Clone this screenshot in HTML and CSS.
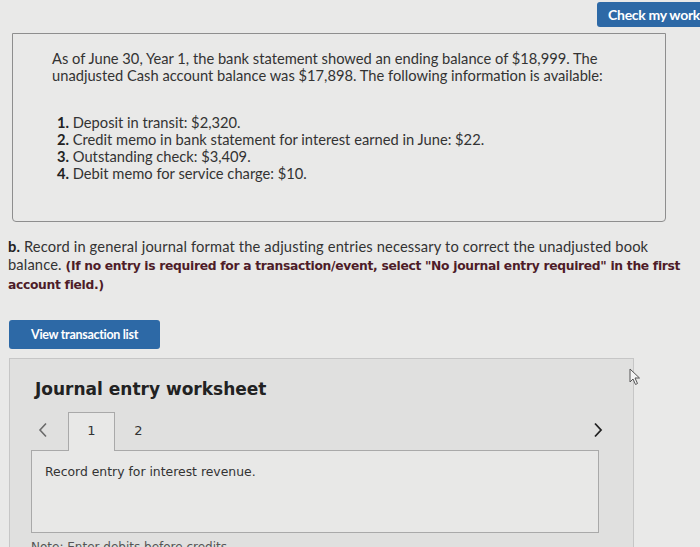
FILE: index.html
```html
<!DOCTYPE html>
<html>
<head>
<meta charset="utf-8">
<link rel="stylesheet" href="styles.css">
</head>
<body>
<div class="topbar"><button class="btn check">Check my work</button></div>
<div class="question">
  <p class="intro">As of June 30, Year 1, the bank statement showed an ending balance of $18,999. The unadjusted Cash account balance was $17,898. The following information is available:</p>
  <ol class="items">
    <li><b>1.</b> Deposit in transit: $2,320.</li>
    <li><b>2.</b> Credit memo in bank statement for interest earned in June: $22.</li>
    <li><b>3.</b> Outstanding check: $3,409.</li>
    <li><b>4.</b> Debit memo for service charge: $10.</li>
  </ol>
</div>
<p class="partb"><b class="lbl">b.</b> Record in general journal format the adjusting entries necessary to correct the unadjusted book balance. <span class="note">(If no entry is required for a transaction/event, select "No journal entry required" in the first account field.)</span></p>
<button class="btn view">View transaction list</button>
<div class="journal">
  <h2 class="jtitle">Journal entry worksheet</h2>
  <div class="tabs">
    <span class="arrow">
      <svg width="10" height="16" viewBox="0 0 10 16"><path d="M8 1.5 L2 8 L8 14.5" fill="none" stroke="#6a6a6a" stroke-width="1.6"/></svg>
    </span>
    <span class="tab active">1</span>
    <span class="tab">2</span>
    <span class="spacer"></span>
    <span class="arrow right">
      <svg width="10" height="16" viewBox="0 0 10 16"><path d="M2 1.5 L8 8 L2 14.5" fill="none" stroke="#222" stroke-width="1.8"/></svg>
    </span>
  </div>
  <div class="entry">Record entry for interest revenue.</div>
  <div class="enote">Note: Enter debits before credits.</div>
  <svg class="cursor" width="12" height="18" viewBox="0 0 12 18"><path d="M1 1 L1 14 L4 11 L6.5 16.5 L8.5 15.5 L6 10 L10.5 10 Z" fill="#f4f4f4" stroke="#555" stroke-width="1"/></svg>
</div>
</body>
</html>
```
FILE: styles.css
```css
html, body {
  margin: 0;
  padding: 0;
}
body {
  background: #e9e9e8;
  width: 700px;
  height: 547px;
  overflow: hidden;
  font-family: Lato, "Liberation Sans", sans-serif;
  color: #333;
}
.topbar {
  display: flex;
  justify-content: flex-end;
  height: 30px;
  padding-top: 2px;
  box-sizing: border-box;
  margin-right: -12px;
}
.btn {
  background: #2d69a6;
  color: #fff;
  border: none;
  border-radius: 3px;
  font-family: Lato, "Liberation Sans", sans-serif;
  font-weight: 700;
  cursor: pointer;
}
.check {
  height: 25px;
  padding: 0 12px 0 11px;
  font-size: 14px;
  letter-spacing: -0.3px;
}
.question {
  margin: 3px 34px 0 12px;
  height: 189px;
  box-sizing: border-box;
  border: 1px solid #8e8e8e;
  border-radius: 0 0 4px 4px;
  padding: 16px 10px 0 39px;
}
.intro {
  margin: 0;
  font-size: 14.7px;
  line-height: 17px;
  width: 580px;
}
.items {
  list-style: none;
  margin: 30px 0 0 5px;
  padding: 0;
  font-size: 14.7px;
  line-height: 17px;
}
.items b { font-weight: 700; color: #222; }
.partb {
  margin: 16px 0 0 8px;
  width: 680px;
  font-size: 14.7px;
  line-height: 17.5px;
  letter-spacing: 0.14px;
}
.partb .lbl { color: #222; }
.note {
  font-family: "DejaVu Sans", sans-serif;
  font-weight: 700;
  font-size: 12.3px;
  letter-spacing: -0.3px;
  color: #4e1c28;
}
.view {
  display: block;
  margin: 25px 0 0 9px;
  width: 151px;
  height: 29px;
  font-size: 12.5px;
  letter-spacing: -0.3px;
}
.journal {
  position: relative;
  margin: 9px 0 0 9px;
  width: 625px;
  height: 200px;
  box-sizing: border-box;
  border: 1px solid #c6c6c6;
  background: #e0e0df;
  padding: 0 34px 0 21px;
}
.jtitle {
  margin: 19px 0 0 4px;
  font-family: "DejaVu Sans", sans-serif;
  font-size: 17px;
  font-weight: 700;
  line-height: 22px;
  color: #222;
}
.tabs {
  display: flex;
  align-items: flex-end;
  height: 38px;
  margin-top: 13px;
  position: relative;
  z-index: 1;
  margin-bottom: -1px;
  font-family: "DejaVu Sans", sans-serif;
  font-size: 13px;
  color: #333;
}
.arrow {
  align-self: flex-start;
  padding-top: 9px;
  width: 37px;
  padding-left: 7px;
  box-sizing: border-box;
}
.tab {
  width: 47px;
  height: 38px;
  box-sizing: border-box;
  padding-top: 10px;
  text-align: center;
}
.tab.active {
  border: 1px solid #a9a9a9;
  border-bottom: none;
  background: #e8e8e7;
  height: 39px;
}
.spacer { flex: 1; }
.arrow.right {
  width: 20px;
  padding-left: 0;
  margin-right: -14px;
}
.entry {
  height: 83px;
  box-sizing: border-box;
  border: 1px solid #a9a9a9;
  background: #e8e8e7;
  padding: 12px 13px;
  font-family: "DejaVu Sans", sans-serif;
  font-size: 12.4px;
  line-height: 18px;
  color: #333;
}
.enote {
  margin-top: 7px;
  font-family: "DejaVu Sans", sans-serif;
  font-size: 12px;
  color: #555;
}
.cursor {
  position: absolute;
  left: 619px;
  top: 9px;
}
```
